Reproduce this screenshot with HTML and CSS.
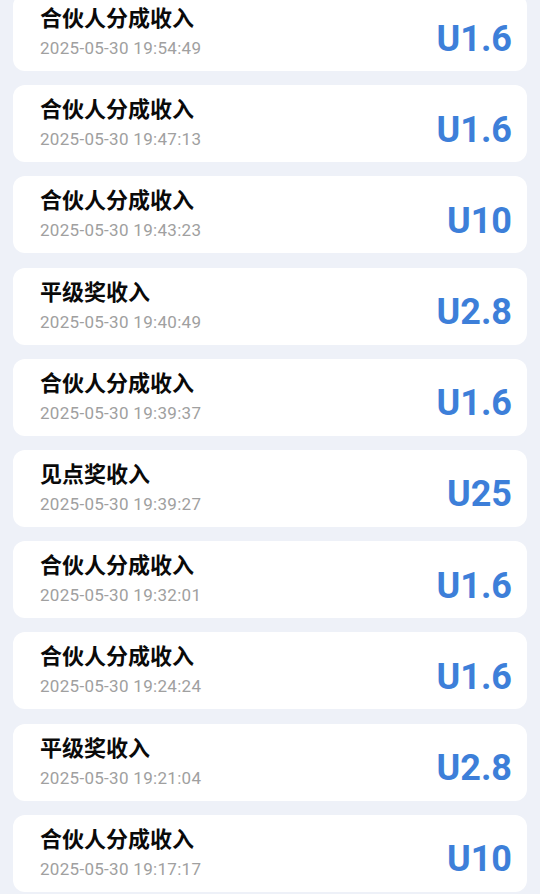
FILE: index.html
```html
<!DOCTYPE html>
<html lang="zh-CN">
<head>
    <meta charset="UTF-8">
    <meta name="viewport" content="width=device-width, initial-scale=1.0">
    <title>收入明细</title>
    <link rel="stylesheet" href="styles.css">
</head>
<body>
    <div id="record-list">
        <div class="record">
            <div class="record-info">
                <div class="record-title">合伙人分成收入</div>
                <div class="record-time">2025-05-30 19:54:49</div>
            </div>
            <div class="record-amount">U1.6</div>
        </div>
        <div class="record">
            <div class="record-info">
                <div class="record-title">合伙人分成收入</div>
                <div class="record-time">2025-05-30 19:47:13</div>
            </div>
            <div class="record-amount">U1.6</div>
        </div>
        <div class="record">
            <div class="record-info">
                <div class="record-title">合伙人分成收入</div>
                <div class="record-time">2025-05-30 19:43:23</div>
            </div>
            <div class="record-amount">U10</div>
        </div>
        <div class="record">
            <div class="record-info">
                <div class="record-title">平级奖收入</div>
                <div class="record-time">2025-05-30 19:40:49</div>
            </div>
            <div class="record-amount">U2.8</div>
        </div>
        <div class="record">
            <div class="record-info">
                <div class="record-title">合伙人分成收入</div>
                <div class="record-time">2025-05-30 19:39:37</div>
            </div>
            <div class="record-amount">U1.6</div>
        </div>
        <div class="record">
            <div class="record-info">
                <div class="record-title">见点奖收入</div>
                <div class="record-time">2025-05-30 19:39:27</div>
            </div>
            <div class="record-amount">U25</div>
        </div>
        <div class="record">
            <div class="record-info">
                <div class="record-title">合伙人分成收入</div>
                <div class="record-time">2025-05-30 19:32:01</div>
            </div>
            <div class="record-amount">U1.6</div>
        </div>
        <div class="record">
            <div class="record-info">
                <div class="record-title">合伙人分成收入</div>
                <div class="record-time">2025-05-30 19:24:24</div>
            </div>
            <div class="record-amount">U1.6</div>
        </div>
        <div class="record">
            <div class="record-info">
                <div class="record-title">平级奖收入</div>
                <div class="record-time">2025-05-30 19:21:04</div>
            </div>
            <div class="record-amount">U2.8</div>
        </div>
        <div class="record">
            <div class="record-info">
                <div class="record-title">合伙人分成收入</div>
                <div class="record-time">2025-05-30 19:17:17</div>
            </div>
            <div class="record-amount">U10</div>
        </div>
    </div>
</body>
</html>
```

FILE: styles.css
```css
body {
    margin: 0;
    background-color: #eef1f8;
    font-family: Roboto, "Noto Sans CJK SC", sans-serif;
    overflow: hidden;
}
#record-list {
    display: flex;
    flex-direction: column;
    gap: 14.2px;
    padding: 0 13px;
    margin-top: -6px;
}
.record {
    height: 77px;
    background-color: #ffffff;
    border-radius: 12px;
    display: flex;
    align-items: center;
    justify-content: space-between;
    padding: 0 15px 0 27px;
}
.record-info {
    display: flex;
    flex-direction: column;
    gap: 6px;
    margin-bottom: 1px;
}
.record-title {
    font-size: 22px;
    font-weight: bold;
    color: #0a0a0a;
    line-height: 26px;
}
.record-time {
    font-size: 17px;
    letter-spacing: 0.3px;
    color: #a0a0a0;
    line-height: 20px;
}
.record-amount {
    font-size: 36px;
    font-weight: bold;
    color: #3d7fd9;
    padding-top: 12px;
}
```
